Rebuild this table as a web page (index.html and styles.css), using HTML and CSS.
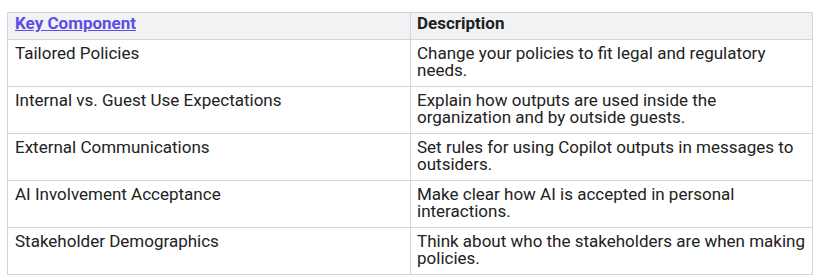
FILE: index.html
```html
<!DOCTYPE html>
<html lang="en">
<head>
    <meta charset="UTF-8">
    <meta name="viewport" content="width=device-width, initial-scale=1.0">
    <title>Key Components</title>
    <link rel="stylesheet" href="styles.css">
</head>
<body>

<div class="container">
    <table class="components-table">
        <thead>
            <tr>
                <th class="col-key"><a href="#" class="sort-link">Key Component</a></th>
                <th>Description</th>
            </tr>
        </thead>
        <tbody>
            <tr>
                <td>Tailored Policies</td>
                <td>Change your policies to fit legal and regulatory needs.</td>
            </tr>
            <tr>
                <td>Internal vs. Guest Use Expectations</td>
                <td>Explain how outputs are used inside the organization and by outside guests.</td>
            </tr>
            <tr>
                <td>External Communications</td>
                <td>Set rules for using Copilot outputs in messages to outsiders.</td>
            </tr>
            <tr>
                <td>AI Involvement Acceptance</td>
                <td>Make clear how AI is accepted in personal interactions.</td>
            </tr>
            <tr>
                <td>Stakeholder Demographics</td>
                <td>Think about who the stakeholders are when making policies.</td>
            </tr>
        </tbody>
    </table>
</div>

</body>
</html>
```

FILE: styles.css
```css
/* General styles */
body {
    font-family: Roboto, Arial, sans-serif;
    background-color: #fff;
    color: #222;
    margin: 0;
    padding: 0;
}

.container {
    padding: 12px 7px 0 7px;
}

/* Table styles */
.components-table {
    width: 806px;
    border-collapse: collapse;
    font-size: 17px;
    line-height: 17px;
    table-layout: fixed;
}

.components-table th, .components-table td {
    border: 1px solid #d3d5da;
    text-align: left;
    vertical-align: top;
    padding: 5px 6px 7px 7px;
}

.components-table td {
    height: 34px;
}

.components-table th {
    background-color: #f1f2f4;
    font-weight: bold;
    padding-top: 2px;
    padding-bottom: 7px;
    color: #1f1f1f;
}

.components-table .col-key {
    width: 389px;
}

.components-table td:last-child, .components-table th:last-child {
    padding-left: 6px;
}

.sort-link {
    color: #5a4ee6;
    text-decoration: underline;
}
```
